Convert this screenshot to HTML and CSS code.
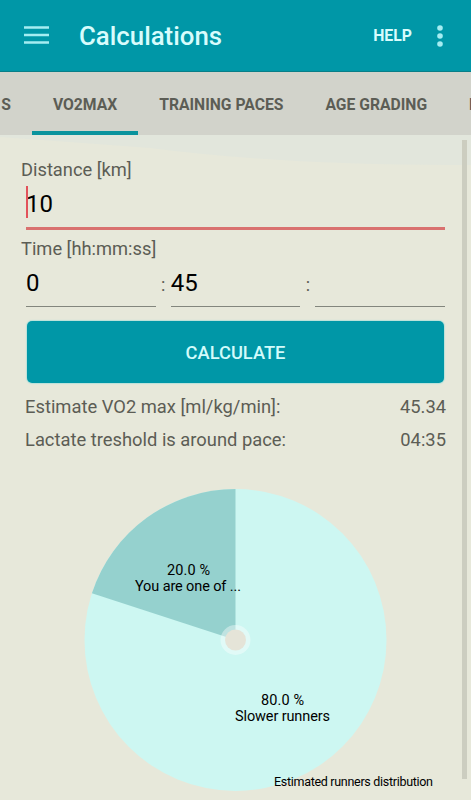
FILE: index.html
```
<!DOCTYPE html>
<html lang="en">
<head>
  <meta charset="UTF-8">
  <meta name="viewport" content="width=device-width, initial-scale=1.0">
  <title>Calculations</title>
  <link rel="stylesheet" href="styles.css">
</head>
<body>
  <header class="toolbar">
    <svg class="menu-icon" width="25" height="18" viewBox="0 0 25 18">
      <path d="M0 1.5h25M0 9h25M0 16.5h25" stroke="#a5edf2" stroke-width="2.6"/>
    </svg>
    <h1 class="title">Calculations</h1>
    <span class="help">HELP</span>
    <svg class="more-icon" width="6" height="22" viewBox="0 0 6 22">
      <g fill="#a5edf2">
        <circle cx="3" cy="3" r="2.8"/>
        <circle cx="3" cy="11" r="2.8"/>
        <circle cx="3" cy="19" r="2.8"/>
      </g>
    </svg>
  </header>

  <nav class="tabs">
    <div class="tab tab-first">S</div>
    <div class="tab active">VO2MAX</div>
    <div class="tab">TRAINING PACES</div>
    <div class="tab">AGE GRADING</div>
    <div class="tab">R</div>
  </nav>

  <main class="content">
    <svg class="paper" width="471" height="34" viewBox="0 0 471 34">
      <path d="M0 0H471V30Q290 31 150 13Q70 7 0 2Z" fill="#e2e6dc"/>
    </svg>

    <form class="form">
      <div class="label">Distance [km]</div>
      <div class="field focused"><span class="caret"></span>10</div>

      <div class="label label-time">Time [hh:mm:ss]</div>
      <div class="time-row">
        <div class="field">0</div>
        <span class="colon">:</span>
        <div class="field">45</div>
        <span class="colon">:</span>
        <div class="field"></div>
      </div>

      <button class="calculate" type="button">CALCULATE</button>
    </form>

    <div class="results">
      <div class="result"><span>Estimate VO2 max [ml/kg/min]:</span><span>45.34</span></div>
      <div class="result"><span>Lactate treshold is around pace:</span><span>04:35</span></div>
    </div>

    <svg class="chart" width="471" height="340" viewBox="0 0 471 340">
      <!-- slower runners 80%, the rest 20% -->
      <circle cx="235.5" cy="180" r="151" fill="#cdf7f2"/>
      <path d="M235.5 180V29A151 151 0 0 0 91.9 133.3Z" fill="#95d1ce"/>
      <circle cx="235.5" cy="180" r="15" fill="#fff" fill-opacity="0.4"/>
      <circle cx="235.5" cy="180" r="10.5" fill="#e5e4d8"/>
      <g class="slice-text">
        <text x="188.5" y="115" textLength="43">20.0 %</text>
        <text x="188" y="131" textLength="106">You are one of ...</text>
        <text x="282.5" y="245" textLength="43">80.0 %</text>
        <text x="282.5" y="261" textLength="95">Slower runners</text>
      </g>
      <text class="chart-caption" x="274" y="326" textLength="159">Estimated runners distribution</text>
    </svg>

    <div class="scrollbar"></div>
  </main>
</body>
</html>
```
FILE: styles.css
```
* {
  box-sizing: border-box;
}

body {
  margin: 0;
  height: 800px;
  overflow: hidden;
  background-color: #e7e8da;
  font-family: Roboto, sans-serif;
  color: #5c5d55;
}

.toolbar {
  display: flex;
  align-items: center;
  height: 72px;
  padding: 0 28px 0 24px;
  background-color: #0097a7;
  border-bottom: 1px solid #087f88;
}

.menu-icon {
  margin-top: -2px;
}

.title {
  flex: 1;
  margin: 1px 0 0 30px;
  font-size: 25.8px;
  font-weight: 500;
  color: #d8fcfc;
}

.help {
  font-size: 15.8px;
  font-weight: 700;
  color: #d8fcfc;
}

.more-icon {
  margin-left: 25px;
}

.tabs {
  display: flex;
  height: 63px;
  overflow: hidden;
  background-color: #d2d3cb;
}

.tab {
  flex: none;
  height: 63px;
  padding: 3px 21px 0;
  line-height: 60px;
  font-size: 15.7px;
  font-weight: 700;
  white-space: nowrap;
}

.tab-first {
  margin-left: -19.8px;
}

.tab.active {
  border-bottom: 4px solid #0a939d;
}

.content {
  position: relative;
  height: 665px;
}

.paper {
  position: absolute;
  top: 0;
  left: 0;
}

.form {
  position: relative;
  padding: 23px 26px 0 21px;
}

.label {
  height: 24px;
  line-height: 24px;
  font-size: 18.3px;
}

.label-time {
  margin-top: 7px;
}

.field {
  position: relative;
  height: 38px;
  border-bottom: 1.5px solid #83867d;
  line-height: 29px;
  font-size: 24px;
  color: #000;
}

.focused {
  height: 48px;
  margin-left: 5px;
  border-bottom: 3px solid #d9716f;
  line-height: 44px;
}

.caret {
  position: absolute;
  top: 4px;
  left: 0;
  width: 2px;
  height: 32px;
  background-color: #e2525a;
}

.time-row {
  display: flex;
  height: 47px;
  padding: 8px 0 0 5px;
}

.time-row .field {
  flex: 1;
}

.colon {
  width: 15px;
  line-height: 31px;
  font-size: 18px;
  text-align: center;
}

.calculate {
  display: block;
  width: 417px;
  height: 62px;
  margin: 13px 0 0 6px;
  padding: 0;
  border: 0;
  border-radius: 5px;
  background-color: #0097a7;
  box-shadow: 0 0 1px 1px #b9e2da;
  font-family: inherit;
  font-size: 18.3px;
  font-weight: 500;
  color: #d2fbfb;
}

.results {
  padding: 8px 25px 0;
}

.result {
  display: flex;
  justify-content: space-between;
  height: 33px;
  line-height: 32px;
  font-size: 18.35px;
}

.chart {
  position: absolute;
  top: 325px;
  left: 0;
}

.slice-text {
  font-size: 14.5px;
  text-anchor: middle;
}

.chart-caption {
  font-size: 12.5px;
}

.scrollbar {
  position: absolute;
  top: 5px;
  right: 4px;
  width: 5px;
  height: 639px;
  background-color: #cccdc0;
}
```
